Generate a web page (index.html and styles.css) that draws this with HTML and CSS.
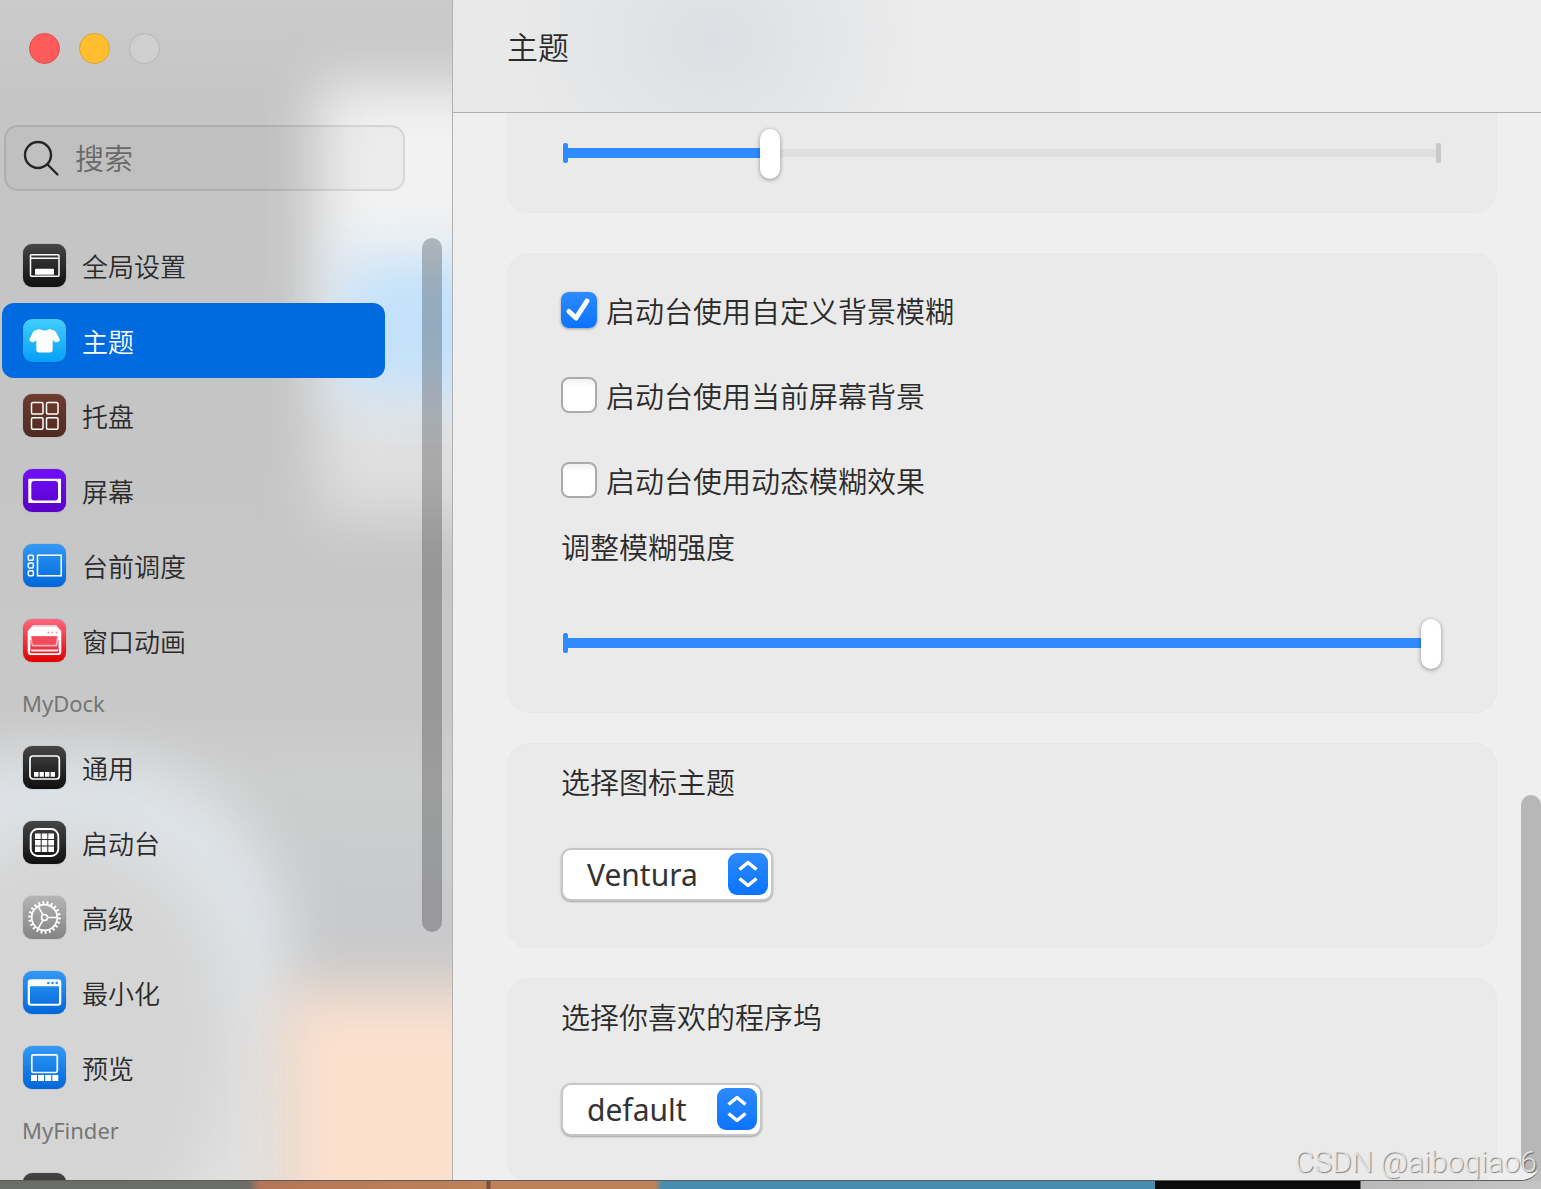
FILE: index.html
```html
<!DOCTYPE html>
<html lang="zh-CN">
<head>
  <meta charset="UTF-8">
  <meta name="viewport" content="width=device-width, initial-scale=1.0">
  <title>主题</title>
  <link rel="stylesheet" href="styles.css">
</head>
<body>
  <div class="window">

    <aside class="sidebar">
      <div class="backdrop">
        <div class="blob blob-white"></div>
        <div class="blob blob-blue"></div>
        <div class="blob blob-round"></div>
        <div class="blob blob-round-inner"></div>
        <div class="blob blob-peach"></div>
      </div>

      <div class="traffic">
        <button class="light red" aria-label="关闭"></button>
        <button class="light yellow" aria-label="最小化"></button>
        <button class="light grey" aria-label="缩放"></button>
      </div>

      <label class="search">
        <svg width="38" height="38" viewBox="0 0 38 38" fill="none" stroke="#262626" stroke-width="2.4" stroke-linecap="round">
          <circle cx="16" cy="16" r="13"/>
          <path d="M25.500 25.500L35.500 35.500"/>
        </svg>
        <input type="text" placeholder="搜索" aria-label="搜索">
      </label>

      <nav class="nav">
        <a class="item" href="#global">
          <span class="icon black">
            <svg viewBox="0 0 43 43" fill="none" stroke="#fff" stroke-width="1.500">
              <rect x="7.500" y="10.800" width="28.500" height="21.500" rx="1"/>
              <path d="M7.500 14.300h28.500"/>
              <rect x="12" y="24.700" width="19" height="6" rx="1" fill="#fff" stroke="none"/>
            </svg>
          </span>
          全局设置
        </a>
        <a class="item active" href="#theme">
          <span class="icon cyan">
            <svg viewBox="0 0 43 43" fill="#fff">
              <path d="M16.500 10Q21.500 13 26.500 10L31 11.500Q32.500 12.200 33.200 13.500L37 21Q35.500 23.500 32.300 23.300L29.700 21V30.500Q29.700 33.500 26.700 33.500H16.300Q13.300 33.500 13.300 30.500V21L10.700 23.300Q7.500 23.500 6.200 21L9.800 13.500Q10.500 12.200 12 11.500Z"/>
            </svg>
          </span>
          主题
        </a>
        <a class="item" href="#tray">
          <span class="icon brown">
            <svg viewBox="0 0 43 43" fill="none" stroke="#fff" stroke-width="1.500">
              <rect x="8.500" y="8.500" width="11.500" height="11.500" rx="1.500"/>
              <rect x="23.500" y="8.500" width="11.500" height="11.500" rx="1.500"/>
              <rect x="8.500" y="23.800" width="11.500" height="11.500" rx="1.500"/>
              <rect x="23.500" y="23.800" width="11.500" height="11.500" rx="1.500"/>
            </svg>
          </span>
          托盘
        </a>
        <a class="item" href="#screen">
          <span class="icon purple">
            <svg viewBox="0 0 43 43" fill="#fff" fill-rule="evenodd">
              <path d="M5.300 9.700H38V34H5.300ZM11.300 12Q8.300 12 8.300 15V28.600Q8.300 31.600 11.300 31.600H32Q35 31.600 35 28.600V15Q35 12 32 12Z"/>
            </svg>
          </span>
          屏幕
        </a>
        <a class="item" href="#stage">
          <span class="icon blue">
            <svg viewBox="0 0 43 43" fill="none" stroke="#fff" stroke-width="1.500">
              <rect x="5.300" y="11.200" width="5" height="5" rx="1"/>
              <rect x="5.300" y="19" width="5" height="5" rx="1"/>
              <rect x="5.300" y="26.700" width="5" height="5" rx="1"/>
              <rect x="14.500" y="11.200" width="23.700" height="20.600"/>
            </svg>
          </span>
          台前调度
        </a>
        <a class="item" href="#animation">
          <span class="icon red-tile">
            <svg viewBox="0 0 43 43">
              <path d="M10 6.200H33L38.300 12V33Q38.300 36 35.300 36H7.700Q4.700 36 4.700 33V12Z" fill="#fff"/>
              <path d="M10 6.200H33L34.500 8H8.500Z" fill="#ffd0d6"/>
              <path d="M7 29V33Q7 34.200 8.500 34.200H34.500Q36 34.200 36 33V29Z" fill="#e5202b"/>
              <path d="M7.500 26H35.500V31Q35.500 32.500 34 32.500H9Q7.500 32.500 7.500 31Z" fill="#fde3e5"/>
              <path d="M7.500 21H35.500V29Q35.500 30.500 34 30.500H9Q7.500 30.500 7.500 29Z" fill="#e93444"/>
              <path d="M7.500 17H35.500L34.500 26Q34.300 27.500 33 27.500H10Q8.700 27.500 8.500 26Z" fill="#f9b4bb"/>
              <path d="M8.500 17.200H34L33 24.500Q32.800 25.700 31.500 25.700H11Q9.700 25.700 9.500 24.500Z" fill="#ef4b5a"/>
              <g fill="#ff8d9b"><circle cx="25.300" cy="13.500" r=".9"/><circle cx="29.300" cy="13.500" r=".9"/><circle cx="33.500" cy="13.500" r=".9"/></g>
            </svg>
          </span>
          窗口动画
        </a>

        <h2 class="group">MyDock</h2>
        <a class="item" href="#general">
          <span class="icon black">
            <svg viewBox="0 0 43 43" fill="#fff">
              <rect x="7" y="10" width="29.300" height="23" rx="3" fill="none" stroke="#fff" stroke-width="1.700"/>
              <path d="M11 26h4.500v4.700H11zM16.600 26h4.300v4.700h-4.300zM22 26h4.400v4.700H22zM27.600 26h4.400v4.700h-4.400z"/>
            </svg>
          </span>
          通用
        </a>
        <a class="item" href="#launchpad">
          <span class="icon black">
            <svg viewBox="0 0 43 43" fill="#fff">
              <rect x="7.700" y="8" width="27.600" height="27" rx="7" fill="none" stroke="#fff" stroke-width="1.900"/>
              <path d="M12 12.500h5.700v5.500H12zM18.700 12.500h5.600v5.500h-5.600zM25.300 12.500h5.700v5.500h-5.700zM12 19h5.700v5.500H12zM18.700 19h5.600v5.500h-5.600zM25.300 19h5.700v5.500h-5.700zM12 25.500h5.700v5.500H12zM18.700 25.500h5.600v5.500h-5.600zM25.300 25.500h5.700v5.500h-5.700z"/>
            </svg>
          </span>
          启动台
        </a>
        <a class="item" href="#advanced">
          <span class="icon silver">
            <svg viewBox="0 0 43 43" fill="none" stroke="#fff" stroke-width="1.700">
              <circle cx="21.500" cy="21.500" r="12.800"/>
              <circle cx="21.500" cy="21.500" r="14.800" stroke-width="3" pathLength="44" stroke-dasharray=".9 1.100"/>
              <circle cx="21.500" cy="21.500" r="3"/>
              <path d="M24.500 21.500H34.500M20 18.900L15 10.200M20 24.100L15 32.800"/>
            </svg>
          </span>
          高级
        </a>
        <a class="item" href="#minimize">
          <span class="icon blue">
            <svg viewBox="0 0 43 43">
              <path d="M8 8.300H35Q38.300 8.300 38.300 11.500V31.500Q38.300 34.700 35 34.700H8Q4.700 34.700 4.700 31.500V11.500Q4.700 8.300 8 8.300ZM7 15.300V31.500Q7 32.700 8.200 32.700H34.800Q36 32.700 36 31.500V15.300Z" fill="#fff" fill-rule="evenodd"/>
              <g fill="#2287ec"><circle cx="25.300" cy="12" r="1.200"/><circle cx="29.500" cy="12" r="1.200"/><circle cx="33.700" cy="12" r="1.200"/></g>
            </svg>
          </span>
          最小化
        </a>
        <a class="item" href="#preview">
          <span class="icon blue">
            <svg viewBox="0 0 43 43" fill="#fff">
              <rect x="8.800" y="8.800" width="25.500" height="17.700" rx="1.500" fill="none" stroke="#fff" stroke-width="1.700"/>
              <path d="M8 29h6v6H8zM15.100 29h6v6h-6zM22.200 29h6v6h-6zM29.300 29h6v6h-6z"/>
            </svg>
          </span>
          预览
        </a>

        <h2 class="group">MyFinder</h2>
        <a class="item" href="#finder" aria-label="MyFinder">
          <span class="icon black"></span>
        </a>
      </nav>
      <div class="thumb side-thumb"></div>
    </aside>

    <main class="main">
      <header class="header">
        <h1>主题</h1>
      </header>

      <div class="content">
        <section class="card card-first">
          <div class="slider">
            <input type="range" min="0" max="100" value="23" style="--fill: 23%" aria-label="强度">
          </div>
        </section>

        <section class="card card-blur">
          <label class="check">
            <input type="checkbox" checked>
            <svg class="tick" viewBox="0 0 36 36" fill="none" stroke="#fff" stroke-width="5" stroke-linecap="round" stroke-linejoin="round">
              <path d="M8 19.500L15 26L26 9"/>
            </svg>
            <span>启动台使用自定义背景模糊</span>
          </label>
          <label class="check">
            <input type="checkbox">
            <span>启动台使用当前屏幕背景</span>
          </label>
          <label class="check">
            <input type="checkbox">
            <span>启动台使用动态模糊效果</span>
          </label>
          <label class="field-name" for="blur">调整模糊强度</label>
          <div class="slider">
            <input id="blur" type="range" min="0" max="100" value="100" style="--fill: 100%">
          </div>
        </section>

        <section class="card card-select">
          <label class="field-name" for="icon-theme">选择图标主题</label>
          <div class="select">
            <select id="icon-theme">
              <option>Ventura</option>
            </select>
            <svg class="arrows" viewBox="0 0 40 42" fill="none" stroke="#fff" stroke-width="3.500" stroke-linejoin="round">
              <path d="M11.500 16.500L20 9.500L28.500 16.500M11.500 25.500L20 32.500L28.500 25.500"/>
            </svg>
          </div>
        </section>

        <section class="card card-select">
          <label class="field-name" for="dock-theme">选择你喜欢的程序坞</label>
          <div class="select">
            <select id="dock-theme">
              <option>default</option>
            </select>
            <svg class="arrows" viewBox="0 0 40 42" fill="none" stroke="#fff" stroke-width="3.500" stroke-linejoin="round">
              <path d="M11.500 16.500L20 9.500L28.500 16.500M11.500 25.500L20 32.500L28.500 25.500"/>
            </svg>
          </div>
        </section>
      </div>
      <div class="thumb main-thumb"></div>
    </main>
  </div>

  <div class="desktop"></div>
  <div class="watermark">CSDN @aiboqiao6</div>
</body>
</html>
```
FILE: styles.css
```css
* {
  box-sizing: border-box;
}
body {
  margin: 0;
  height: 100vh;
  display: flex;
  flex-direction: column;
  overflow: hidden;
  font-family: "Noto Sans", "Noto Sans CJK SC", sans-serif;
  font-weight: 350;
  color: #2b2b2b;
  background: #bdbdbd;
}
h1, h2 {
  margin: 0;
  font-weight: 350;
}
.window {
  flex: 1;
  min-height: 0;
  display: flex;
  background: #efefef;
  border-bottom: 1px solid #5c5c58;
  border-bottom-right-radius: 20px;
  overflow: hidden;
}

/* Sidebar */
.sidebar {
  position: relative;
  width: 453px;
  flex-shrink: 0;
  display: flex;
  flex-direction: column;
  padding-top: 33px;
  border-right: 1px solid #b0b0b0;
  background: #c6c6c6;
  overflow: hidden;
}
.backdrop {
  position: absolute;
  inset: 0;
  background: linear-gradient(#cbcbcc, #c5c5c5 100px, #c5c5c5 450px, #c8c8c9 650px, #c9c8c8 710px, #cdcece 780px, #c9cacc 900px);
}
.blob {
  position: absolute;
  filter: blur(28px);
}
.blob-white {
  left: 316px;
  top: 84px;
  width: 220px;
  height: 440px;
  background: linear-gradient(#f2f2f2 40%, #d9d9da);
}
.blob-blue {
  left: 340px;
  top: 258px;
  width: 200px;
  height: 136px;
  background: #c3e1fb;
}
.blob-round {
  left: -100px;
  top: 758px;
  width: 390px;
  height: 560px;
  border-radius: 120px 190px 0 0;
  background: linear-gradient(#dfe4e8 40%, #e2e2e2 60%);
}
.blob-round-inner {
  left: -80px;
  top: 830px;
  width: 310px;
  height: 500px;
  border-radius: 140px 180px 300px 0;
  background: #d5d5d5;
}
.blob-peach {
  left: 280px;
  top: 990px;
  width: 260px;
  height: 300px;
  background: #fbe0ce;
}
.traffic {
  position: relative;
  display: flex;
  gap: 19px;
  padding-left: 29px;
}
.light {
  width: 31px;
  height: 31px;
  padding: 0;
  border-radius: 50%;
  border: 1px solid #b5b5b5;
  background: #cfcfcf;
}
.light.red {
  background: #ff5b5a;
  border-color: #e24b4b;
}
.light.yellow {
  background: #ffbd2f;
  border-color: #dfa32a;
}
.search {
  position: relative;
  display: flex;
  align-items: center;
  gap: 15px;
  height: 66px;
  margin: 61px 47px 0 4px;
  padding-left: 16px;
  border: 2px solid rgba(0, 0, 0, 0.09);
  border-radius: 14px;
  background: rgba(0, 0, 0, 0.025);
}
.search input {
  flex: 1;
  min-width: 0;
  padding: 0;
  border: none;
  outline: none;
  background: none;
  font: inherit;
  font-size: 29px;
}
.search input::placeholder {
  color: #686868;
}
.nav {
  position: relative;
  flex: 1;
  min-height: 0;
  margin-top: 37px;
  padding: 0 67px 0 2px;
  overflow: hidden;
}
.item {
  display: flex;
  align-items: center;
  gap: 16px;
  height: 75px;
  padding-left: 21px;
  border-radius: 12px;
  font-size: 26px;
  color: #2b2b2b;
  text-decoration: none;
}
.item.active {
  background: #006ae0;
  color: #fff;
}
.group {
  height: 52px;
  padding-left: 20px;
  font-size: 22px;
  line-height: 50px;
  font-weight: 400;
  color: #757575;
}
.icon {
  width: 43px;
  height: 43px;
  border-radius: 9px;
  overflow: hidden;
  box-shadow: 0 0 1px rgba(0, 0, 0, 0.5);
}
.icon svg {
  display: block;
}
.black {
  background: linear-gradient(#454545, #101010);
}
.cyan {
  background: linear-gradient(#43ceff, #059ff9);
}
.brown {
  background: linear-gradient(#703b2f, #4f2a21);
}
.purple {
  background: linear-gradient(#7010fb, #5a00c6);
}
.blue {
  background: linear-gradient(#3299f6, #0067da);
}
.red-tile {
  background: linear-gradient(#ff6780, #e00000);
}
.silver {
  background: linear-gradient(#b4b4b4, #848484);
}

/* Scroll bars */
.thumb {
  position: absolute;
  width: 20px;
  border-radius: 10px;
}
.side-thumb {
  right: 10px;
  top: 238px;
  height: 694px;
  background: rgba(0, 0, 0, 0.24);
}
.main-thumb {
  right: 0;
  top: 795px;
  bottom: 7px;
  background: #b7b7b7;
}

/* Main pane */
.main {
  position: relative;
  flex: 1;
  min-width: 0;
  display: flex;
  flex-direction: column;
}
.header {
  flex-shrink: 0;
  height: 113px;
  padding: 0 54px;
  border-bottom: 1px solid #b0b0b0;
  background: radial-gradient(ellipse 210px 180px at 260px 40px, #dcdfe3, rgba(220, 223, 227, 0)), linear-gradient(90deg, #e9e9e9, #ededed 60%);
}
h1 {
  font-size: 31px;
  line-height: 94px;
}
.content {
  flex: 1;
  min-height: 0;
  padding: 0 44px 0 54px;
  overflow: hidden;
}
.card {
  margin-bottom: 30px;
  padding: 0 53px;
  border: 1px solid #e8e8e8;
  border-radius: 22px;
  background: #eaeaea;
  font-size: 29px;
}
.card-first {
  margin-bottom: 40px;
  padding-top: 15px;
  padding-bottom: 32px;
  border-top: none;
  border-radius: 0 0 22px 22px;
}
.card-blur {
  padding-top: 13px;
  padding-bottom: 42px;
}
.card-select {
  height: 205px;
  padding-top: 15px;
}
.check {
  position: relative;
  display: flex;
  align-items: center;
  gap: 9px;
  height: 85px;
}
.check input {
  appearance: none;
  width: 36px;
  height: 36px;
  margin: 0;
  border: 2px solid #ababab;
  border-radius: 8px;
  background: linear-gradient(#f1f1f1, #fff 8px);
}
.check input:checked {
  border: none;
  background: linear-gradient(#2e8aff, #0a74ff);
  box-shadow: 0 1px 3px rgba(0, 0, 0, 0.35);
}
.tick {
  position: absolute;
  left: 0;
  width: 36px;
  height: 36px;
  pointer-events: none;
}
.field-name {
  display: block;
  height: 48px;
  line-height: 48px;
}
.card-blur .field-name {
  margin-top: 2px;
}
.slider {
  position: relative;
  height: 52px;
  margin: 0 2px;
}
.card-blur .slider {
  margin-top: 46px;
}
.slider::before,
.slider::after {
  content: "";
  position: absolute;
  top: 15px;
  width: 5px;
  height: 20px;
  border-radius: 2px;
  background: #2e8bff;
}
.slider::after {
  right: 0;
  z-index: 1;
  background: #c8c8c8;
}
.slider input {
  appearance: none;
  position: relative;
  z-index: 2;
  display: block;
  width: 100%;
  height: 52px;
  margin: 0;
  background: none;
}
.slider input::-webkit-slider-runnable-track {
  height: 52px;
  background:
    linear-gradient(#2e8bff, #2e8bff) 3px 20px / calc(var(--fill) - 8px) 10px no-repeat,
    linear-gradient(#dedede, #dedede) 3px 21px / calc(100% - 8px) 8px no-repeat;
}
.slider input::-webkit-slider-thumb {
  appearance: none;
  width: 20px;
  height: 50px;
  margin-top: 1px;
  border-radius: 10px;
  background: #fff;
  box-shadow: 0 1px 4px rgba(0, 0, 0, 0.4);
}
.select {
  position: relative;
  display: inline-block;
  margin-top: 41px;
}
.select select {
  appearance: none;
  display: block;
  height: 53px;
  padding: 0 73px 0 24px;
  border: 2px solid #c6c6c6;
  border-radius: 10px;
  background: #fff;
  box-shadow: 0 1px 2px rgba(0, 0, 0, 0.3);
  font: inherit;
  font-weight: 400;
  font-size: 30px;
  color: #333;
}
.arrows {
  position: absolute;
  right: 5px;
  top: 5px;
  width: 40px;
  height: 42px;
  border-radius: 9px;
  background: linear-gradient(#2e8aff, #0a74ff);
  pointer-events: none;
}

/* Strip of the desktop below the window */
.desktop {
  height: 8px;
  background: linear-gradient(90deg, #6b6d69 248px, #b57657 260px, #bd8258 486px, #7a5140 487px, #7a5140 490px, #bd8258 491px, #bd8258 655px, #488db0 662px, #488db0 1155px, #0c0c0c 1155px, #0c0c0c 1360px, #b9b9b9 1361px, #c4c4c4);
}
.watermark {
  position: absolute;
  right: 4px;
  bottom: 9px;
  font-family: Roboto, sans-serif;
  font-size: 30px;
  font-weight: 300;
  line-height: 36px;
  color: rgba(236, 236, 236, 0.9);
  text-shadow: 1px 1px 1px rgba(0, 0, 0, 0.45);
}
```
